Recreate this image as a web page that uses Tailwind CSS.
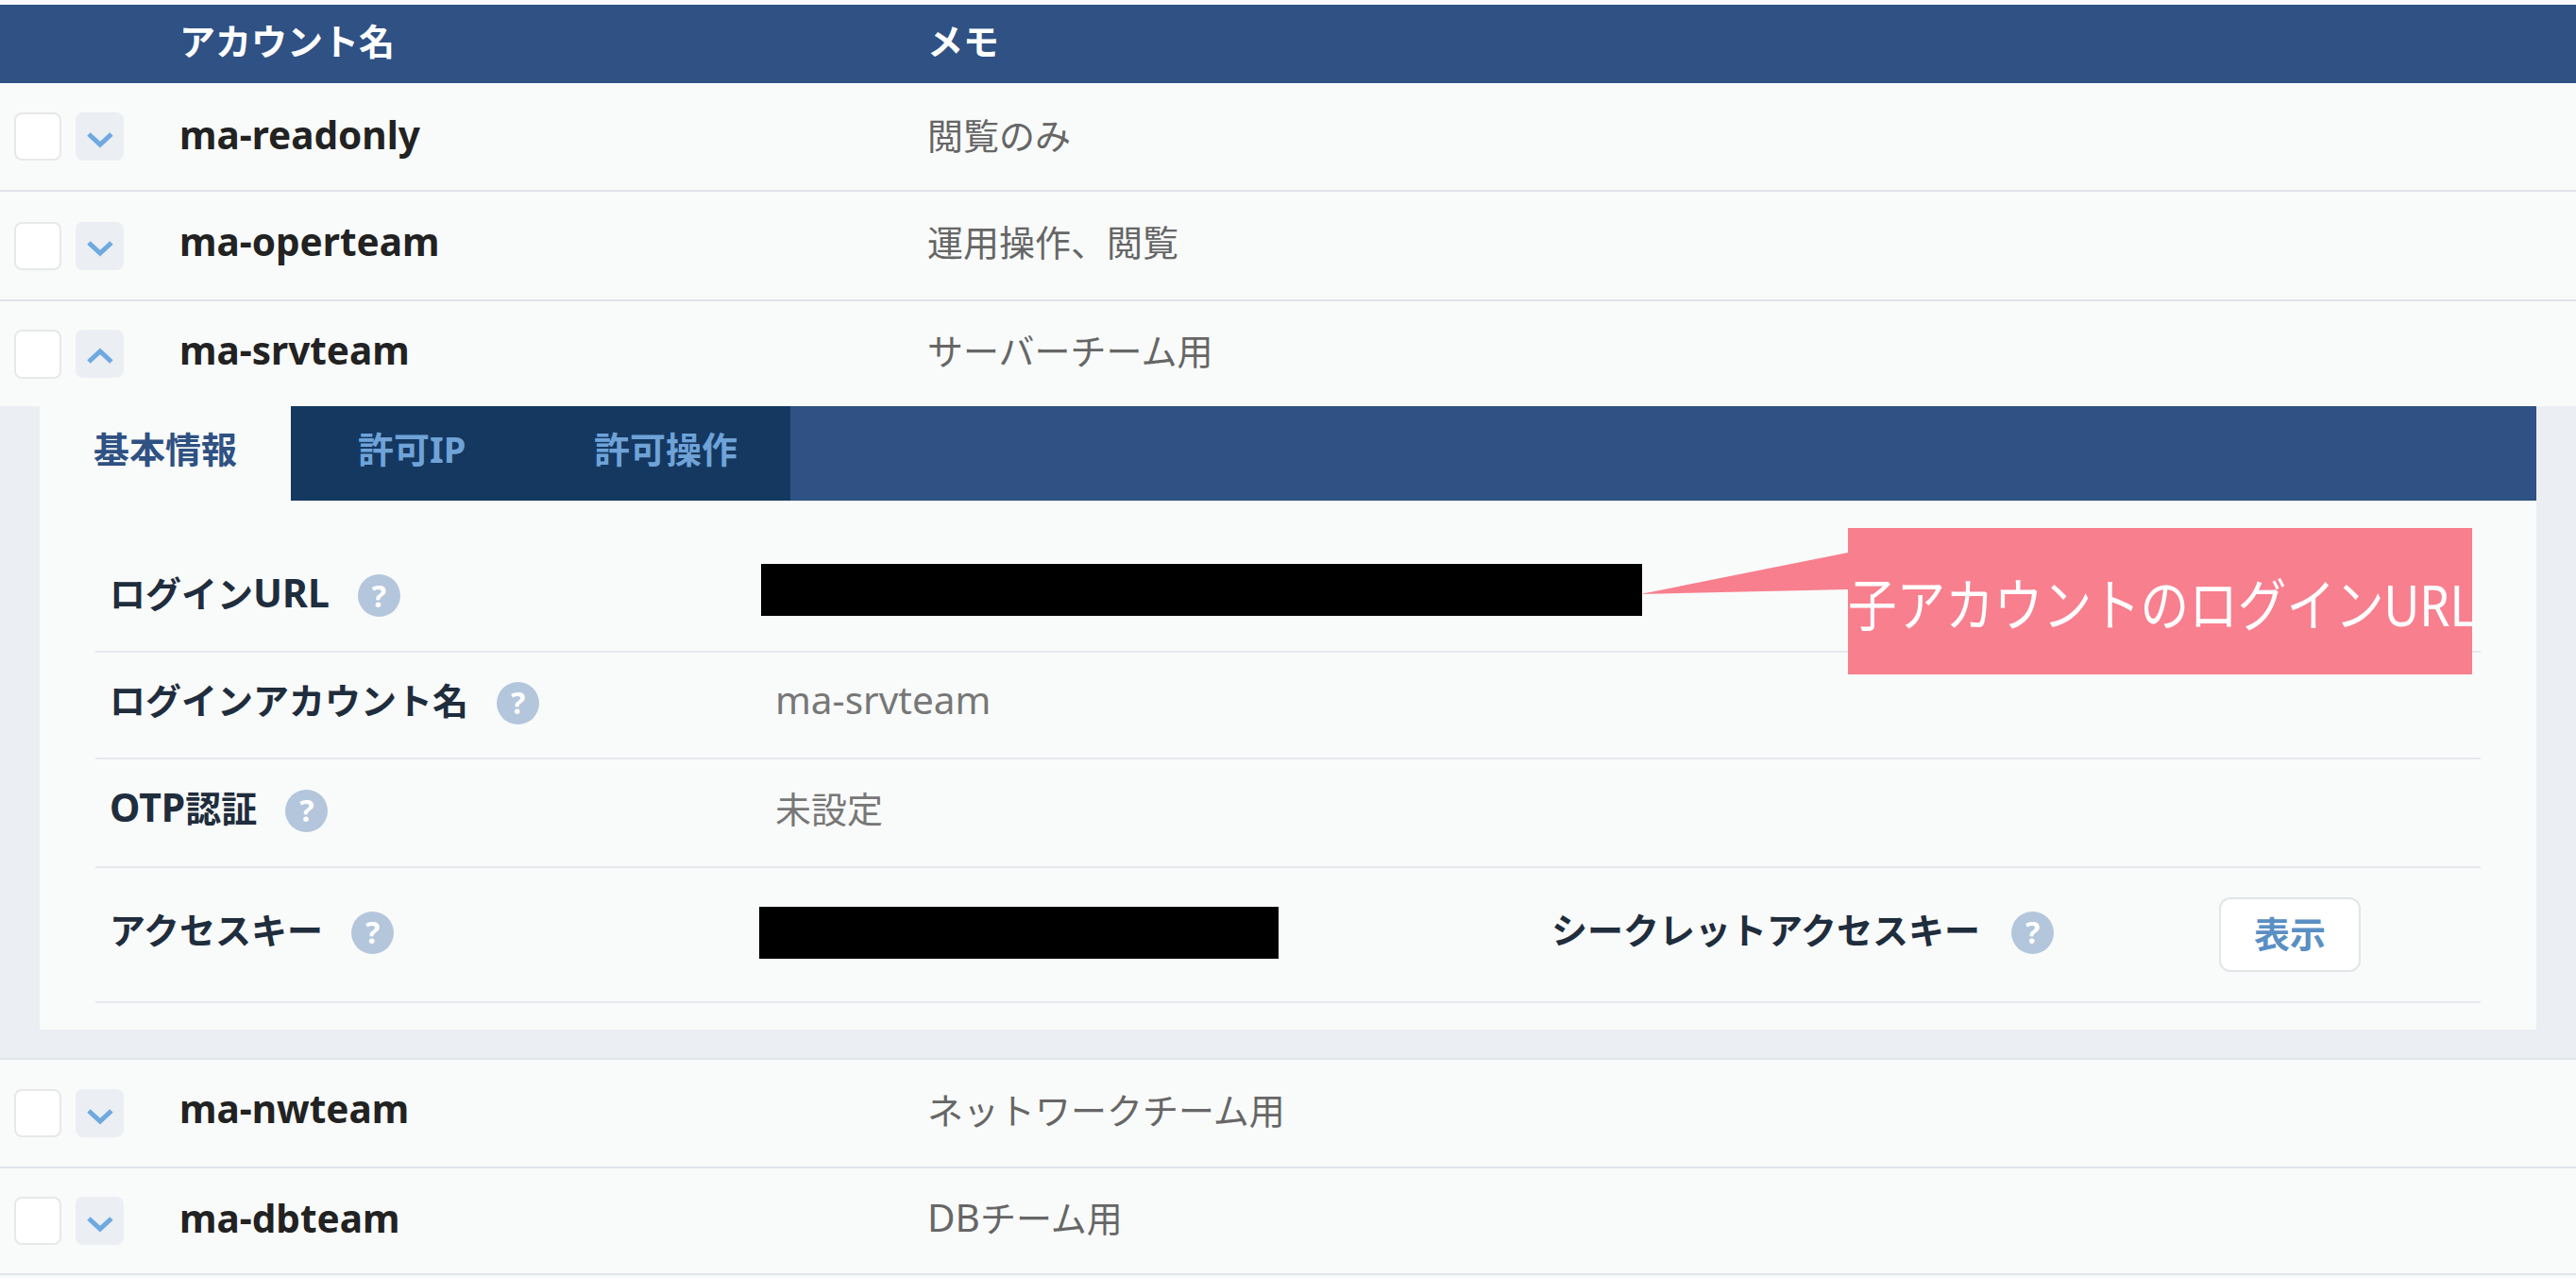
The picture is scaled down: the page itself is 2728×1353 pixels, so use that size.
<!DOCTYPE html>
<html lang="ja">
  <head>
    <meta charset="UTF-8" />
    <title>アカウント一覧</title>
    <script src="https://cdn.jsdelivr.net/npm/@tailwindcss/browser@4"></script>
  </head>
  <body class="bg-[#f9fbfa] font-['Noto_Sans','Noto_Sans_CJK_JP',sans-serif] text-[38px] leading-none overflow-hidden">
    <div class="w-[2728px] h-[1353px] pt-[5px]">
      <!-- Header -->
      <div class="h-[83px] bg-[#2f5183] flex items-center pb-[8px] text-white font-bold">
        <div class="w-[190px]"></div>
        <div class="w-[792px]">アカウント名</div>
        <div>メモ</div>
      </div>

      <!-- Rows -->
      <div class="h-[115px] flex items-center pl-[15px] border-b-2 border-[#dfe4ea]">
        <div class="w-[50px] h-[51px] bg-white border-2 border-[#e6e8ea] rounded-lg"></div>
        <button class="w-[51px] h-[51px] ml-[15px] bg-[#ebeef3] rounded-lg flex items-center justify-center">
          <svg class="mt-[6px]" width="28" height="18" viewBox="0 0 28 18" fill="none" stroke="#6ea9e0" stroke-width="5"><path d="M2 3l12 11L26 3" /></svg>
        </button>
        <div class="w-[792px] ml-[59px] pb-[3px] font-bold text-[40.5px] text-[#222]">ma-readonly</div>
        <div class="pb-[4px] text-[#666]">閲覧のみ</div>
      </div>
      <div class="h-[116px] flex items-center pl-[15px] border-b-2 border-[#dfe4ea]">
        <div class="w-[50px] h-[51px] bg-white border-2 border-[#e6e8ea] rounded-lg"></div>
        <button class="w-[51px] h-[51px] ml-[15px] bg-[#ebeef3] rounded-lg flex items-center justify-center">
          <svg class="mt-[6px]" width="28" height="18" viewBox="0 0 28 18" fill="none" stroke="#6ea9e0" stroke-width="5"><path d="M2 3l12 11L26 3" /></svg>
        </button>
        <div class="w-[792px] ml-[59px] pb-[8px] font-bold text-[40.5px] text-[#222]">ma-operteam</div>
        <div class="pb-[8px] text-[#666]">運用操作、閲覧</div>
      </div>
      <div class="h-[111px] flex items-center pl-[15px]">
        <div class="w-[50px] h-[52px] bg-white border-2 border-[#e6e8ea] rounded-lg"></div>
        <button class="w-[51px] h-[51px] ml-[15px] bg-[#ebeef3] rounded-lg flex items-center justify-center">
          <svg class="mt-[5px]" width="28" height="18" viewBox="0 0 28 18" fill="none" stroke="#6ea9e0" stroke-width="5"><path d="M2 15L14 4l12 11" /></svg>
        </button>
        <div class="w-[792px] ml-[59px] pb-[6px] font-bold text-[40.5px] text-[#222]">ma-srvteam</div>
        <div class="pb-[8px] text-[#666]">サーバーチーム用</div>
      </div>

      <!-- Detail panel -->
      <div class="h-[692px] bg-[#ebeef3] px-[42px] border-b-2 border-[#dfe4ea]">
        <div class="relative h-[660px] bg-[#f9fbfa]">
          <!-- Tabs -->
          <div class="h-[100px] bg-[#2f5183] flex font-bold">
            <div class="w-[266px] bg-[#f9fbfa] text-[#2f5183] pl-[57px] pb-[10px] flex items-center">基本情報</div>
            <div class="w-[529px] bg-[#153861] text-[#6fa3d8] flex items-center pl-[71px] pb-[10px]">
              <span class="w-[250px]">許可IP</span>
              <span>許可操作</span>
            </div>
          </div>

          <div class="ml-[59px] mr-[59px] pt-[47px]">
            <div class="h-[114px] flex items-center border-b-2 border-[#e6e9ed]">
              <div class="w-[705px] pl-[15px] pb-[5px] flex items-center gap-[30px] font-bold text-[#1f2d3d]">
                <span class="pb-[7px]">ログイン<span class="text-[41px]">URL</span></span>
                <span class="w-[45px] h-[45px] rounded-full bg-[#b3c6dc] text-white text-[32px] font-bold flex items-center justify-center">?</span>
              </div>
              <div class="w-[933px] h-[55px] mb-[18px] bg-black"></div>
            </div>
            <div class="h-[113px] flex items-center border-b-2 border-[#e6e9ed]">
              <div class="w-[720px] pl-[15px] pb-[5px] flex items-center gap-[30px] font-bold text-[#1f2d3d]">
                <span class="pb-[7px]">ログインアカウント名</span>
                <span class="w-[45px] h-[45px] rounded-full bg-[#b3c6dc] text-white text-[32px] font-bold flex items-center justify-center">?</span>
              </div>
              <div class="pb-[10px] text-[40.5px] text-[#777]">ma-srvteam</div>
            </div>
            <div class="h-[115px] flex items-center border-b-2 border-[#e6e9ed]">
              <div class="w-[720px] pl-[15px] pb-[5px] flex items-center gap-[30px] font-bold text-[#1f2d3d]">
                <span class="pb-[7px]"><span class="text-[41px]">OTP</span>認証</span>
                <span class="w-[45px] h-[45px] rounded-full bg-[#b3c6dc] text-white text-[32px] font-bold flex items-center justify-center">?</span>
              </div>
              <div class="pb-[10px] text-[#777]">未設定</div>
            </div>
            <div class="h-[143px] flex items-center border-b-2 border-[#e6e9ed]">
              <div class="w-[703px] pl-[15px] pb-[5px] flex items-center gap-[30px] font-bold text-[#1f2d3d]">
                <span class="pb-[7px]">アクセスキー</span>
                <span class="w-[45px] h-[45px] rounded-full bg-[#b3c6dc] text-white text-[32px] font-bold flex items-center justify-center">?</span>
              </div>
              <div class="w-[550px] h-[55px] mb-[4px] bg-black"></div>
              <div class="w-[707px] ml-[289px] pb-[5px] flex items-center gap-[33px] font-bold text-[#1f2d3d]">
                <span class="pb-[7px]">シークレットアクセスキー</span>
                <span class="w-[45px] h-[45px] rounded-full bg-[#b3c6dc] text-white text-[32px] font-bold flex items-center justify-center">?</span>
              </div>
              <button class="w-[150px] h-[79px] bg-white border-2 border-[#e2e5e9] rounded-xl pb-[3px] text-[#5a8fc4] font-bold">表示</button>
            </div>
          </div>

          <!-- Callout -->
          <svg class="absolute left-[1695px] top-[155px]" width="222" height="45" viewBox="0 0 222 45"><path d="M0 44L220 0v39z" fill="#f87f8e" /></svg>
          <div class="absolute left-[1915px] top-[129px] w-[661px] h-[155px] bg-[#f87f8e] text-white text-[60px] font-normal whitespace-nowrap flex items-center pt-[6px]"><span class="inline-block origin-left scale-x-[0.86]">子アカウントのログインURL</span></div>
        </div>
      </div>

      <div class="h-[115px] flex items-center pl-[15px] border-b-2 border-[#dfe4ea]">
        <div class="w-[50px] h-[51px] bg-white border-2 border-[#e6e8ea] rounded-lg"></div>
        <button class="w-[51px] h-[51px] ml-[15px] bg-[#ebeef3] rounded-lg flex items-center justify-center">
          <svg class="mt-[6px]" width="28" height="18" viewBox="0 0 28 18" fill="none" stroke="#6ea9e0" stroke-width="5"><path d="M2 3l12 11L26 3" /></svg>
        </button>
        <div class="w-[792px] ml-[59px] pb-[8px] font-bold text-[40.5px] text-[#222]">ma-nwteam</div>
        <div class="pb-[8px] text-[#666]">ネットワークチーム用</div>
      </div>
      <div class="h-[113px] flex items-center pl-[15px] border-b-2 border-[#dfe4ea]">
        <div class="w-[50px] h-[51px] bg-white border-2 border-[#e6e8ea] rounded-lg"></div>
        <button class="w-[51px] h-[51px] ml-[15px] bg-[#ebeef3] rounded-lg flex items-center justify-center">
          <svg class="mt-[6px]" width="28" height="18" viewBox="0 0 28 18" fill="none" stroke="#6ea9e0" stroke-width="5"><path d="M2 3l12 11L26 3" /></svg>
        </button>
        <div class="w-[792px] ml-[59px] pb-[4px] font-bold text-[40.5px] text-[#222]">ma-dbteam</div>
        <div class="pb-[6px] text-[#666]"><span class="text-[40.5px]">DB</span>チーム用</div>
      </div>
    </div>
  </body>
</html>
